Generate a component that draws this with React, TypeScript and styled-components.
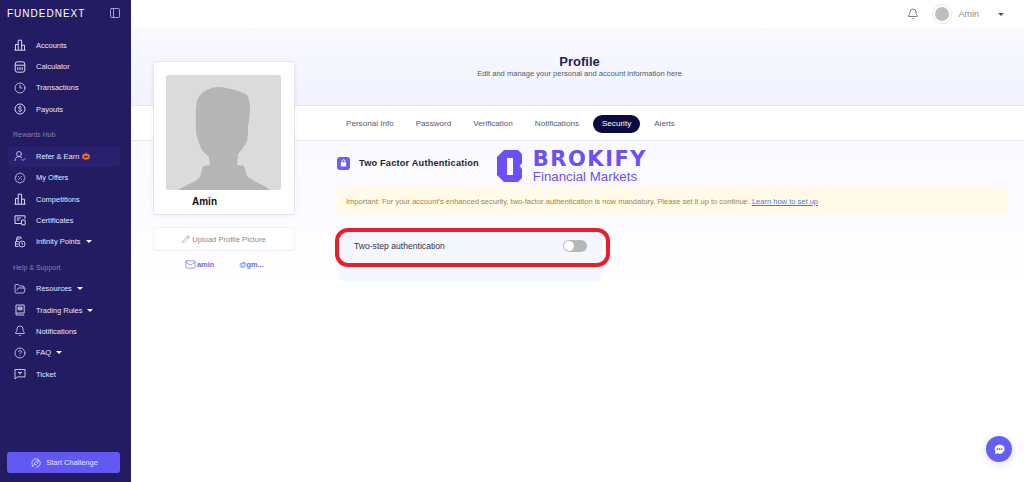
import styled, { createGlobalStyle } from 'styled-components';
import {
  BadgePercent,
  Bell,
  CircleHelp,
  Clock3,
  FolderOpen,
  Mail,
  PanelLeft,
  Pencil,
  UserRoundCheck,
} from 'lucide-react';

const GlobalStyle = createGlobalStyle`
  html, body { margin: 0; padding: 0; height: 100%; }
  body { font-family: "Liberation Sans", Arial, sans-serif; background: #fff; overflow: hidden; }
  #root { height: 100%; }
  * { box-sizing: border-box; }
`;

const Page = styled.div`
  display: flex;
  width: 1024px;
  height: 482px;
`;

const Sidebar = styled.aside`
  width: 131px;
  flex-shrink: 0;
  background: #231c63;
  display: flex;
  flex-direction: column;
  padding: 0 11px 9px 8px;
  color: #e6e6fa;
`;

const Brand = styled.div`
  height: 34.5px;
  flex-shrink: 0;
  display: flex;
  align-items: center;
  justify-content: space-between;
  margin-left: -1px;
  padding: 0 0 8px 0;
  color: #fff;
  svg { width: 12px; height: 12px; color: #c9c9e6; margin-right: -1px; }
`;

const BrandName = styled.span`
  font-size: 10px;
  letter-spacing: 1px;
  white-space: nowrap;
`;

const SectionLabel = styled.div`
  height: 25.5px;
  flex-shrink: 0;
  padding: 9px 0 0 5px;
  font-size: 7px;
  line-height: 12px;
  color: #8480ad;
`;

const Caret = styled.span<{ $color?: string }>`
  width: 0;
  height: 0;
  border-left: 3px solid transparent;
  border-right: 3px solid transparent;
  border-top: 3px solid ${(p) => p.$color ?? '#fff'};
`;

const NavRow = styled.div<{ $active?: boolean }>`
  height: 21.4px;
  flex-shrink: 0;
  display: flex;
  align-items: center;
  gap: 10px;
  padding-left: 6px;
  font-size: 7.5px;
  white-space: nowrap;
  border-radius: 4px;
  background: ${(p) => (p.$active ? '#282170' : 'transparent')};
  svg.icon { width: 12px; height: 12px; flex-shrink: 0; color: #dcdcf2; }
  ${Caret} { margin-left: -5px; }
`;

const GiftBadge = styled.svg`
  width: 8px;
  height: 8px;
  margin-left: -7px;
`;

const StartButton = styled.button`
  margin-top: auto;
  margin-left: -1px;
  height: 21px;
  flex-shrink: 0;
  border: none;
  border-radius: 3px;
  background: #6458f5;
  color: #e5e3ff;
  font: 7.5px "Liberation Sans", Arial, sans-serif;
  display: flex;
  align-items: center;
  justify-content: center;
  gap: 5px;
  padding-left: 8px;
  svg { width: 10px; height: 10px; }
`;

const Main = styled.main`
  position: relative;
  flex: 1;
  display: flex;
  flex-direction: column;
  min-width: 0;
`;

const TopBar = styled.header`
  height: 28px;
  flex-shrink: 0;
  display: flex;
  align-items: center;
  justify-content: flex-end;
  padding-right: 20px;
  background: #fff;
  font-size: 9px;
  svg.bell { width: 12px; height: 12px; margin-right: 13px; color: #555; }
`;

const Avatar = styled.span`
  width: 20px;
  height: 20px;
  border-radius: 50%;
  border: 1px solid #e8e8e8;
  display: flex;
  align-items: center;
  justify-content: center;
  margin-right: 6px;
  &::after {
    content: '';
    width: 14px;
    height: 14px;
    border-radius: 50%;
    background: #bdbdbd;
  }
`;

const UserName = styled.span`
  color: #8a8a8a;
  margin-right: 19px;
`;

const Hero = styled.section`
  height: 78px;
  flex-shrink: 0;
  display: flex;
  flex-direction: column;
  align-items: center;
  padding: 26px 0 0 4px;
  background: linear-gradient(180deg, #f9f9fe 0%, #f1f2fe 100%);
  border-bottom: 1px solid #e6e7f2;
`;

const HeroTitle = styled.h1`
  margin: 0;
  font-size: 13px;
  line-height: 16px;
  font-weight: 700;
  color: #1e2350;
`;

const HeroText = styled.p`
  margin: 0;
  font-size: 7.55px;
  line-height: 8px;
  color: #55586a;
`;

const TabsBar = styled.nav`
  height: 35px;
  flex-shrink: 0;
  display: flex;
  align-items: center;
  gap: 22px;
  padding: 1px 0 0 215px;
  background: #fff;
  border-bottom: 1px solid #e8e9f1;
`;

const Tab = styled.span<{ $active?: boolean }>`
  height: 18px;
  display: flex;
  align-items: center;
  padding: 0 ${(p) => (p.$active ? '9px' : '0')};
  margin: 0 ${(p) => (p.$active ? '-8px' : '0')};
  border-radius: 9px;
  font-size: 8.1px;
  color: ${(p) => (p.$active ? '#fff' : '#555a6e')};
  background: ${(p) => (p.$active ? '#0d0a40' : 'transparent')};
  white-space: nowrap;
`;

const Content = styled.section`
  flex: 1;
  padding: 7px 17px 0 206px;
  background: linear-gradient(180deg, #f9f9ff 0, #fff 150px);
`;

const TitleRow = styled.div`
  height: 39px;
  display: flex;
  align-items: center;
  gap: 9px;
`;

const LockBadge = styled.span`
  width: 13px;
  height: 13px;
  border-radius: 3px;
  background: #6a5cf6;
  display: flex;
  align-items: center;
  justify-content: center;
  margin-top: -9px;
  svg { width: 7px; height: 8px; }
`;

const SectionTitle = styled.h2`
  margin: -9px 0 0;
  font-size: 9.2px;
  font-weight: 700;
  letter-spacing: 0.2px;
  color: #22243a;
  white-space: nowrap;
`;

const BrokifyLogo = styled.div`
  display: flex;
  align-items: center;
  gap: 11px;
  margin: 0 0 3px 9px;
  color: #6d4ef7;
  svg { width: 25px; height: 32px; flex-shrink: 0; }
`;

const BrokifyText = styled.div`
  display: flex;
  flex-direction: column;
`;

const BrokifyName = styled.span`
  font: 700 21px/21px "DejaVu Sans", sans-serif;
  letter-spacing: 1.5px;
`;

const BrokifyTag = styled.span`
  font-size: 13.3px;
  line-height: 14px;
  white-space: nowrap;
`;

const Notice = styled.div`
  height: 28px;
  display: flex;
  align-items: center;
  gap: 2px;
  padding-left: 9px;
  border-radius: 2px;
  background: #fffbe8;
  color: #a3844a;
  font-size: 7.54px;
  white-space: nowrap;
`;

const NoticeLink = styled.a`
  color: #4f76e8;
  text-decoration: underline;
`;

const ToggleCard = styled.div`
  position: relative;
  width: 264px;
  height: 53px;
  margin: 13px 0 0 1px;
  border-radius: 5px;
  background: #f5f7ff;
`;

const ToggleRow = styled.div`
  height: 36px;
  display: flex;
  align-items: center;
  justify-content: space-between;
  padding: 0 15px 0 16px;
  font-size: 8.6px;
  color: #30323f;
`;

const Switch = styled.span`
  width: 24px;
  height: 12px;
  border-radius: 6px;
  background: #b8b8b8;
  padding: 1px;
  &::before {
    content: '';
    display: block;
    width: 10px;
    height: 10px;
    border-radius: 50%;
    background: #fff;
  }
`;

const Highlight = styled.span`
  position: absolute;
  left: -3px;
  top: 0;
  width: 275px;
  height: 39px;
  border: 4px solid #ed1c2b;
  border-radius: 13px;
  pointer-events: none;
`;

const ProfileAside = styled.aside`
  position: absolute;
  left: 22px;
  top: 61px;
  width: 142px;
  display: flex;
  flex-direction: column;
`;

const PhotoCard = styled.div`
  height: 154px;
  padding: 13px 12px 0;
  background: #fff;
  border: 1px solid #e6e6f0;
  border-radius: 3px;
  box-shadow: 0 1px 4px rgba(60, 60, 120, 0.08);
`;

const Photo = styled.svg`
  display: block;
  width: 115px;
  height: 115px;
  border-radius: 2px;
`;

const PhotoName = styled.div`
  margin: 6px 0 0 26px;
  font-size: 10px;
  font-weight: 700;
  color: #111;
`;

const UploadButton = styled.div`
  height: 24px;
  margin-top: 12px;
  display: flex;
  align-items: center;
  justify-content: center;
  gap: 2px;
  background: #fff;
  border: 1px solid #f0f0f6;
  border-radius: 3px;
  color: #8a8a92;
  font-size: 7.6px;
  svg { width: 8px; height: 8px; color: #777; }
`;

const EmailRow = styled.div`
  display: flex;
  align-items: center;
  margin: 8px 0 0 32px;
  color: #6f6af8;
  font-size: 7.4px;
  font-weight: 700;
  svg { width: 11px; height: 11px; margin-right: 1px; }
`;

const EmailTail = styled.span`
  margin-left: 25px;
`;

const ChatBubble = styled.button`
  position: absolute;
  right: 12px;
  bottom: 20px;
  width: 26px;
  height: 26px;
  border: none;
  padding: 0;
  border-radius: 50%;
  background: #6461f2;
  display: flex;
  align-items: center;
  justify-content: center;
  box-shadow: 0 2px 8px rgba(80, 80, 200, 0.2);
  svg { width: 13px; height: 13px; }
`;

const BuildingIcon = () => (
  <svg className="icon" viewBox="0 0 12 12" fill="none" stroke="currentColor" strokeWidth="1">
    <path d="M1.5 11V5.5h2.7M4.2 11V1.2h3.4V11M7.6 6.2h2.9V11M.4 11.2h11.2" />
  </svg>
);

const CalculatorIcon = () => (
  <svg className="icon" viewBox="0 0 12 12" fill="none" stroke="currentColor" strokeWidth="1">
    <rect x="1.2" y="0.8" width="9.6" height="10.4" rx="2.2" />
    <path d="M1.2 4.2h9.6M3.8 6.2v3M6 6.2v3M8.2 6.2v3" />
  </svg>
);

const DollarIcon = () => (
  <svg className="icon" viewBox="0 0 12 12" fill="none" stroke="currentColor" strokeWidth="1">
    <circle cx="6" cy="6" r="5" />
    <path d="M7.6 4.4C7.2 3.6 4.5 3.4 4.5 4.8 4.5 6.2 7.6 5.6 7.6 7.2 7.6 8.6 4.8 8.4 4.4 7.6M6 2.8v.6M6 8.6v.6" />
  </svg>
);

const CertificateIcon = () => (
  <svg className="icon" viewBox="0 0 12 12" fill="none" stroke="currentColor" strokeWidth="1">
    <path d="M7 9.5H1V1.8h10v3" />
    <path d="M2.8 4h4M2.8 6h2.6" />
    <rect x="7.4" y="6" width="3.8" height="4.8" rx="0.6" />
  </svg>
);

const InfinityIcon = () => (
  <svg className="icon" viewBox="0 0 12 12" fill="none" stroke="currentColor" strokeWidth="0.9">
    <path d="M4.4 10.5H1.5V8h3M1.5 8V5.5h3.2M2.5 5.5V3h3.5M3 3V1h4v2" />
    <circle cx="8" cy="8" r="3" />
    <path d="M8 6.5V8l1 .7" />
  </svg>
);

const BookIcon = () => (
  <svg className="icon" viewBox="0 0 12 12" fill="none" stroke="currentColor" strokeWidth="0.9">
    <path d="M2 10V1h8.2v8H3a1 1 0 0 0 0 2h7.2" />
    <path d="M4.2 3h3.8v2.8H4.2zM4.2 4.4h3.8" />
  </svg>
);

const TicketIcon = () => (
  <svg className="icon" viewBox="0 0 12 12" fill="none" stroke="currentColor" strokeWidth="0.9">
    <path d="M1 1.5h10v7.4H3.4L1 11z" />
    <path d="M4 4.4h4M5 5.8h2" />
  </svg>
);

const lucide = { className: 'icon', strokeWidth: 1.6 };

const mainNav = [
  { label: 'Accounts', icon: <BuildingIcon /> },
  { label: 'Calculator', icon: <CalculatorIcon /> },
  { label: 'Transactions', icon: <Clock3 {...lucide} /> },
  { label: 'Payouts', icon: <DollarIcon /> },
];

const tabs = ['Personal Info', 'Password', 'Verification', 'Notifications', 'Security', 'Alerts'];

function App() {
  return (
    <Page>
      <GlobalStyle />
      <Sidebar>
        <Brand>
          <BrandName>FUNDEDNEXT</BrandName>
          <PanelLeft strokeWidth={1.5} />
        </Brand>

        {mainNav.map((item) => (
          <NavRow key={item.label}>
            {item.icon}
            {item.label}
          </NavRow>
        ))}

        <SectionLabel>Rewards Hub</SectionLabel>
        <NavRow $active>
          <UserRoundCheck {...lucide} />
          Refer &amp; Earn
          <GiftBadge viewBox="0 0 8 8">
            <path d="M4 .4v1.4" stroke="#b5502a" strokeWidth="1" />
            <ellipse cx="4" cy="4.6" rx="3.9" ry="3.2" fill="#e8663a" />
            <rect x="2" y="4" width="4" height="1.3" fill="#5a2320" />
          </GiftBadge>
        </NavRow>
        <NavRow>
          <BadgePercent {...lucide} />
          My Offers
        </NavRow>
        <NavRow>
          <BuildingIcon />
          Competitions
        </NavRow>
        <NavRow>
          <CertificateIcon />
          Certificates
        </NavRow>
        <NavRow>
          <InfinityIcon />
          Infinity Points
          <Caret />
        </NavRow>

        <SectionLabel>Help &amp; Support</SectionLabel>
        <NavRow>
          <FolderOpen {...lucide} />
          Resources
          <Caret />
        </NavRow>
        <NavRow>
          <BookIcon />
          Trading Rules
          <Caret />
        </NavRow>
        <NavRow>
          <Bell {...lucide} />
          Notifications
        </NavRow>
        <NavRow>
          <CircleHelp {...lucide} />
          FAQ
          <Caret />
        </NavRow>
        <NavRow>
          <TicketIcon />
          Ticket
        </NavRow>

        <StartButton>
          <svg viewBox="0 0 12 12" fill="none" stroke="currentColor" strokeWidth="1">
            <path d="M2.5 9.5A5 5 0 1 1 6 11" />
            <path d="M9 3C6.5 3 4.5 5 4 7.5L4.8 8.3C7.2 7.8 9 5.6 9 3zM3.8 8.4L1 11" />
          </svg>
          Start Challenge
        </StartButton>
      </Sidebar>

      <Main>
        <TopBar>
          <Bell className="bell" strokeWidth={1.5} />
          <Avatar />
          <UserName>Amin</UserName>
          <Caret $color="#555" />
        </TopBar>

        <Hero>
          <HeroTitle>Profile</HeroTitle>
          <HeroText>Edit and manage your personal and account information here</HeroText>
        </Hero>

        <TabsBar>
          {tabs.map((tab) => (
            <Tab key={tab} $active={tab === 'Security'}>
              {tab}
            </Tab>
          ))}
        </TabsBar>

        <Content>
          <TitleRow>
            <LockBadge>
              <svg viewBox="0 0 7 8" fill="none">
                <path d="M2 3.5V2.2a1.5 1.5 0 0 1 3 0v1.3" stroke="#fff" strokeWidth="0.9" />
                <rect x="0.8" y="3.3" width="5.4" height="4.2" rx="0.7" fill="#fff" />
              </svg>
            </LockBadge>
            <SectionTitle>Two Factor Authentication</SectionTitle>
            <BrokifyLogo>
              <svg viewBox="0 0 25 32" fill="currentColor">
                <path
                  d="M7 0H21L25 4V13L22.5 16L25 19V28L21 32H7L0 25V7ZM10 8V25H16V8Z"
                  fillRule="evenodd"
                />
              </svg>
              <BrokifyText>
                <BrokifyName>BROKIFY</BrokifyName>
                <BrokifyTag>Financial Markets</BrokifyTag>
              </BrokifyText>
            </BrokifyLogo>
          </TitleRow>

          <Notice>
            Important: For your account's enhanced security, two-factor authentication is now mandatory. Please set it up to continue.
            <NoticeLink>Learn how to set up</NoticeLink>
          </Notice>

          <ToggleCard>
            <ToggleRow>
              Two-step authentication
              <Switch />
            </ToggleRow>
            <Highlight />
          </ToggleCard>
        </Content>

        <ProfileAside>
          <PhotoCard>
            <Photo viewBox="0 0 115 115">
              <rect width="115" height="115" fill="#dbdbdb" />
              <path
                d="M12 115C20 110 30 107 34 102L37 91L44 90L43 82C38 78 35 74 34 71C32 64 30 60 30 54C30 50 29 34 31 26C33 20 37 17 41 15C45 13 48 12 52 12C58 12 64 14 69 15C74 16 78 18 81 20C83 24 84 28 84 32C84 40 83 46 82 52C82 58 82 62 81 66C78 72 75 76 72 79L71 90L78 91L81 101C86 106 98 110 104 115Z"
                fill="#b5b5b5"
              />
            </Photo>
            <PhotoName>Amin</PhotoName>
          </PhotoCard>
          <UploadButton>
            <Pencil strokeWidth={1.5} />
            Upload Profile Picture
          </UploadButton>
          <EmailRow>
            <Mail strokeWidth={1.5} />
            amin
            <EmailTail>@gm...</EmailTail>
          </EmailRow>
        </ProfileAside>

        <ChatBubble>
          <svg viewBox="0 0 14 14">
            <path d="M7 1.5a5.5 5 0 1 1-2.2 9.6L2 12.2l.6-2.9A5.5 5 0 0 1 7 1.5z" fill="#fff" />
            <circle cx="4.8" cy="6.5" r="0.9" fill="#555" />
            <circle cx="7" cy="6.5" r="0.9" fill="#555" />
            <circle cx="9.2" cy="6.5" r="0.9" fill="#555" />
          </svg>
        </ChatBubble>
      </Main>
    </Page>
  );
}

export default App;
